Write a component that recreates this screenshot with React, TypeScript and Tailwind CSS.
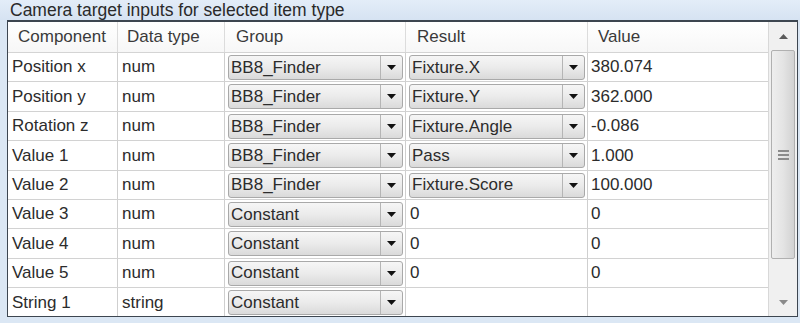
import React from "react";

type Row = {
  c: string;
  t: string;
  g: string;
  r: string;
  rCombo: boolean;
  v: string;
};

const rows: Row[] = [
  { c: "Position x", t: "num", g: "BB8_Finder", r: "Fixture.X", rCombo: true, v: "380.074" },
  { c: "Position y", t: "num", g: "BB8_Finder", r: "Fixture.Y", rCombo: true, v: "362.000" },
  { c: "Rotation z", t: "num", g: "BB8_Finder", r: "Fixture.Angle", rCombo: true, v: "-0.086" },
  { c: "Value 1", t: "num", g: "BB8_Finder", r: "Pass", rCombo: true, v: "1.000" },
  { c: "Value 2", t: "num", g: "BB8_Finder", r: "Fixture.Score", rCombo: true, v: "100.000" },
  { c: "Value 3", t: "num", g: "Constant", r: "0", rCombo: false, v: "0" },
  { c: "Value 4", t: "num", g: "Constant", r: "0", rCombo: false, v: "0" },
  { c: "Value 5", t: "num", g: "Constant", r: "0", rCombo: false, v: "0" },
  { c: "String 1", t: "string", g: "Constant", r: "", rCombo: false, v: "" },
];

function Arrow() {
  return (
    <svg width="9" height="5" viewBox="0 0 9 5">
      <polygon points="0,0 9,0 4.5,5" fill="#111" />
    </svg>
  );
}

function Combo({ text }: { text: string }) {
  return (
    <div className="ml-[3px] mr-[2px] mt-[2px] h-[25px] flex rounded-[3px] border border-[#a9a9a9] bg-gradient-to-b from-[#f6f6f6] via-[#ebebeb] to-[#dadada] overflow-hidden">
      <div className="flex-1 pl-[2px] flex items-center whitespace-nowrap">{text}</div>
      <div className="w-[22px] border-l border-[#b5b5b5] flex items-center justify-center">
        <Arrow />
      </div>
    </div>
  );
}

export default function App() {
  return (
    <div className="w-[800px] h-[323px] bg-[#dbe7f4] font-['Liberation_Sans',Arial,sans-serif] text-[17px] text-[#2c2c2c] overflow-hidden flex flex-col">
      <div className="h-[20px] pl-[10px] leading-[20px] text-[17.5px] text-[#2a2a2a] bg-gradient-to-b from-[#e3edf8] to-[#d6e3f2]">
        Camera target inputs for selected item type
      </div>
      <div className="ml-[7px] w-[791px] h-[297px] border border-[#3d4650] border-t-2 bg-white flex overflow-hidden">
        <div className="w-[760px] flex flex-col">
          <div className="h-[31px] shrink-0 flex border-b border-[#d4d4d4] bg-gradient-to-b from-white to-[#f7f7f7] text-[#3a3a3a]">
            <div className="w-[110px] pl-[10px] flex items-center border-r border-[#dcdcdc]">Component</div>
            <div className="w-[107px] pl-[9px] flex items-center border-r border-[#dcdcdc]">Data type</div>
            <div className="w-[181px] pl-[11px] flex items-center border-r border-[#dcdcdc]">Group</div>
            <div className="w-[182px] pl-[11px] flex items-center border-r border-[#dcdcdc]">Result</div>
            <div className="w-[180px] pl-[10px] flex items-center">Value</div>
          </div>
          {rows.map((row) => (
            <div key={row.c} className="h-[29.4px] shrink-0 flex border-b border-[#d2d2d2]">
              <div className="w-[110px] pl-[4px] flex items-center border-r border-[#cfcfcf]">{row.c}</div>
              <div className="w-[107px] pl-[4px] flex items-center border-r border-[#cfcfcf]">{row.t}</div>
              <div className="w-[181px] border-r border-[#cfcfcf]">
                <Combo text={row.g} />
              </div>
              <div className="w-[182px] border-r border-[#cfcfcf]">
                {row.rCombo ? (
                  <Combo text={row.r} />
                ) : (
                  <div className="h-full pl-[4px] flex items-center">{row.r}</div>
                )}
              </div>
              <div className="w-[180px] pl-[3px] flex items-center">{row.v}</div>
            </div>
          ))}
        </div>
        <div className="flex-1 border-l border-[#d8d8d8] bg-[#f0f0f0] flex flex-col">
          <div className="h-[28px] flex items-center justify-center">
            <svg width="9" height="5" viewBox="0 0 9 5">
              <polygon points="0,5 9,5 4.5,0" fill="#5a5a5a" />
            </svg>
          </div>
          <div className="mx-[2px] h-[209px] rounded-[2px] border border-[#b0b0b0] bg-gradient-to-r from-[#eeeeee] via-[#e4e4e4] to-[#d2d2d2] flex flex-col items-center justify-center gap-[2px]">
            <div className="w-[11px] h-[2px] bg-[#8a8a8a]" />
            <div className="w-[11px] h-[2px] bg-[#8a8a8a]" />
            <div className="w-[11px] h-[2px] bg-[#8a8a8a]" />
          </div>
          <div className="flex-1" />
          <div className="h-[28px] flex items-center justify-center">
            <svg width="9" height="5" viewBox="0 0 9 5">
              <polygon points="0,0 9,0 4.5,5" fill="#8a8a8a" />
            </svg>
          </div>
        </div>
      </div>
    </div>
  );
}
